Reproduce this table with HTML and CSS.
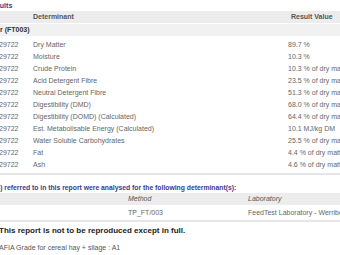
FILE: index.html
```html
<!DOCTYPE html>
<html>
<head>
<meta charset="utf-8">
<link rel="stylesheet" href="styles.css">
</head>
<body>
<div class="page">
  <div class="title"><span class="clip-title">Results</span></div>
  <table class="results">
    <colgroup><col class="c-id"><col class="c-det"><col class="c-val"></colgroup>
    <thead>
      <tr class="head"><th></th><th>Determinant</th><th>Result Value</th></tr>
    </thead>
    <tbody>
      <tr class="group"><td colspan="3"><span class="clip-group">Fodder (FT003)</span></td></tr>
      <tr class="spacer"><td colspan="3"></td></tr>
      <tr><td class="sid">29722</td><td>Dry Matter</td><td>89.7 %</td></tr>
      <tr><td class="sid">29722</td><td>Moisture</td><td>10.3 %</td></tr>
      <tr><td class="sid">29722</td><td>Crude Protein</td><td>10.3 % of dry matter</td></tr>
      <tr><td class="sid">29722</td><td>Acid Detergent Fibre</td><td>23.5 % of dry matter</td></tr>
      <tr><td class="sid">29722</td><td>Neutral Detergent Fibre</td><td>51.3 % of dry matter</td></tr>
      <tr><td class="sid">29722</td><td>Digestibility (DMD)</td><td>68.0 % of dry matter</td></tr>
      <tr><td class="sid">29722</td><td>Digestibility (DOMD) (Calculated)</td><td>64.4 % of dry matter</td></tr>
      <tr><td class="sid">29722</td><td>Est. Metabolisable Energy (Calculated)</td><td>10.1 MJ/kg DM</td></tr>
      <tr><td class="sid">29722</td><td>Water Soluble Carbohydrates</td><td>25.5 % of dry matter</td></tr>
      <tr><td class="sid">29722</td><td>Fat</td><td>4.4 % of dry matter</td></tr>
      <tr><td class="sid">29722</td><td>Ash</td><td>4.6 % of dry matter</td></tr>
    </tbody>
  </table>
  <div class="subtitle"><span class="clip-sub">Sample(s) referred to in this report were analysed for the following determinant(s):</span></div>
  <table class="methods">
    <colgroup><col class="m-id"><col class="m-method"><col class="m-lab"></colgroup>
    <thead>
      <tr class="head2"><th></th><th>Method</th><th>Laboratory</th></tr>
    </thead>
    <tbody>
      <tr><td></td><td>TP_FT/003</td><td>FeedTest Laboratory - Werribee</td></tr>
    </tbody>
  </table>
  <p class="notice">This report is not to be reproduced except in full.</p>
  <p class="grade">AFIA Grade for cereal hay + silage : A1</p>
</div>
</body>
</html>
```

FILE: styles.css
```css
html, body {
  margin: 0;
  padding: 0;
  background: #ffffff;
  overflow: hidden;
}
.page {
  width: 340px;
  font-family: "Liberation Sans", Arial, sans-serif;
  font-size: 7px;
  color: #666666;
  white-space: nowrap;
}
.title {
  height: 11px;
  line-height: 11px;
  font-weight: bold;
  color: #3a3a8c;
  overflow: hidden;
}
.clip-title { margin-left: -13px; }
table {
  border-collapse: collapse;
  table-layout: fixed;
}
.results { width: 420px; }
.c-id { width: 33px; }
.c-det { width: 255px; }
.c-val { width: 132px; }
th, td {
  padding: 0;
  text-align: left;
  overflow: hidden;
}
.head th {
  height: 12px;
  line-height: 12px;
  background: #ececec;
  color: #555555;
  font-weight: bold;
}
.head th:nth-child(3) { padding-left: 3px; }
.group td {
  height: 12px;
  line-height: 12px;
  background: #f1f1f1;
  color: #333333;
  font-weight: bold;
  border-top: 1px solid #ffffff;
}
.clip-group { margin-left: -21px; }
.results .spacer td { height: 2.5px; line-height: 2.5px; }
.results tbody tr td {
  line-height: 12.1px;
}
.results .group td { line-height: 12px; }
.sid { text-indent: -1px; }
.subtitle {
  border-top: 2px solid #e6e6e6;
  margin-top: 1.5px;
  height: 18px;
  line-height: 26px;
  font-size: 6.8px;
  font-weight: bold;
  color: #3a3a8c;
  overflow: hidden;
}
.clip-sub { margin-left: -30px; }
.methods {
  width: 430px;
  border-bottom: 2px solid #e6e6e6;
}
.m-id { width: 128px; }
.m-method { width: 120px; }
.m-lab { width: 182px; }
.head2 th {
  height: 12px;
  line-height: 12px;
  background: #ececec;
  color: #555555;
  font-weight: normal;
  font-style: italic;
}
.methods tbody td {
  line-height: 15px;
}
.notice {
  margin: 3px 0 0 -1px;
  font-size: 8px;
  font-weight: bold;
  color: #222222;
  line-height: 12px;
}
.grade {
  margin: 4.5px 0 0 -1px;
  line-height: 11px;
  color: #555555;
}
```
